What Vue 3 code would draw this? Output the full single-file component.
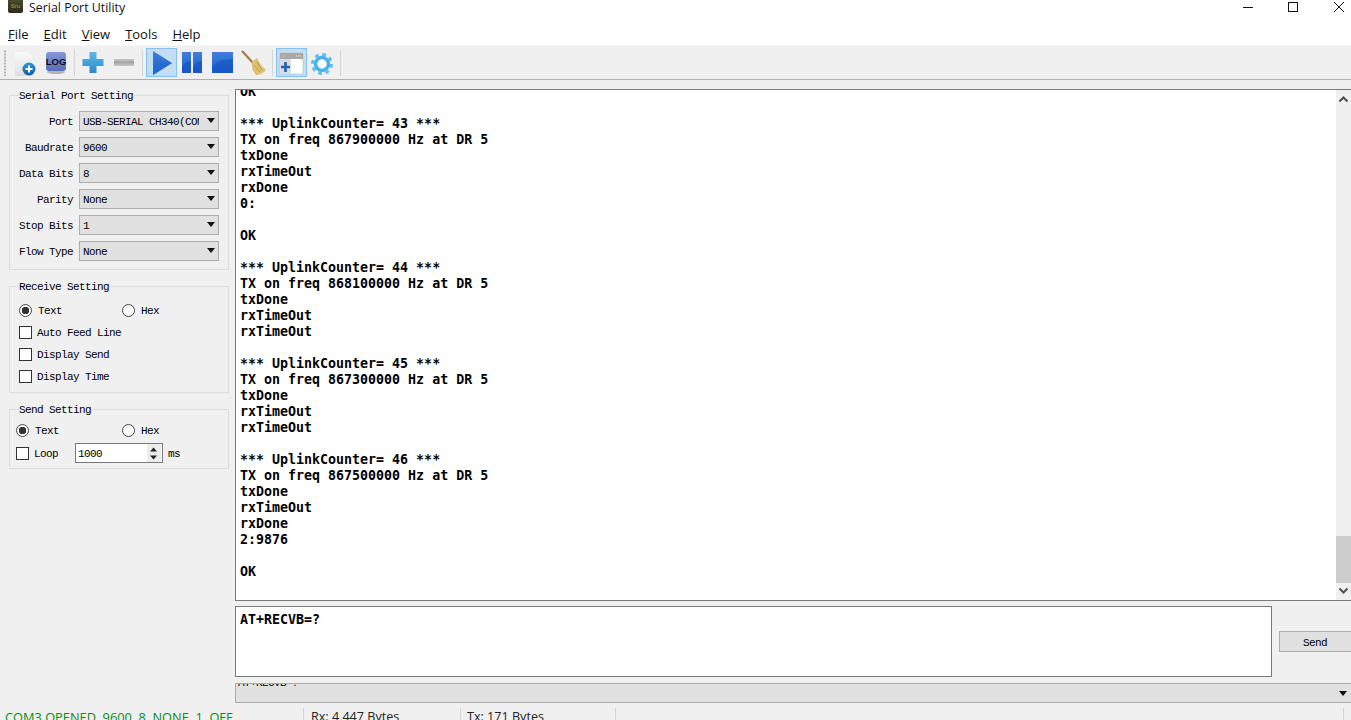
<script setup>
const menus = [
  { key: 'F', rest: 'ile' },
  { key: 'E', rest: 'dit' },
  { key: 'V', rest: 'iew' },
  { key: 'T', rest: 'ools' },
  { key: 'H', rest: 'elp' }
]
const combos = [
  { label: 'Port', value: 'USB-SERIAL CH340(COM3)' },
  { label: 'Baudrate', value: '9600' },
  { label: 'Data Bits', value: '8' },
  { label: 'Parity', value: 'None' },
  { label: 'Stop Bits', value: '1' },
  { label: 'Flow Type', value: 'None' }
]
const checks = ['Auto Feed Line', 'Display Send', 'Display Time']
const log = `OK

*** UplinkCounter= 43 ***
TX on freq 867900000 Hz at DR 5
txDone
rxTimeOut
rxDone
0:

OK

*** UplinkCounter= 44 ***
TX on freq 868100000 Hz at DR 5
txDone
rxTimeOut
rxTimeOut

*** UplinkCounter= 45 ***
TX on freq 867300000 Hz at DR 5
txDone
rxTimeOut
rxTimeOut

*** UplinkCounter= 46 ***
TX on freq 867500000 Hz at DR 5
txDone
rxTimeOut
rxDone
2:9876

OK
`
</script>

<template>
  <div class="app">
    <header class="titlebar">
      <div class="appicon"><span>Sru</span></div>
      <span class="title">Serial Port Utility</span>
      <div class="winbtns">
        <svg width="12" height="12" viewBox="0 0 12 12"><path d="M1 6.5h10" stroke="#111" stroke-width="1" /></svg>
        <svg width="12" height="12" viewBox="0 0 12 12"><rect x="1.5" y="1.5" width="9" height="9" fill="none" stroke="#111" /></svg>
        <svg class="closeicon" width="12" height="12" viewBox="0 0 12 12"><path d="M1 1l10 10M11 1L1 11" stroke="#111" stroke-width="1" /></svg>
      </div>
    </header>

    <nav class="menubar">
      <span v-for="m in menus" :key="m.key" class="menu"><u>{{ m.key }}</u>{{ m.rest }}</span>
    </nav>

    <div class="toolbar">
      <div class="grip"></div>
      <div class="tool">
        <svg width="31" height="29" viewBox="0 0 31 29">
          <defs>
            <linearGradient id="pg" x1="0" y1="0" x2="0" y2="1"><stop offset="0" stop-color="#fbfbfb" /><stop offset="1" stop-color="#dedede" /></linearGradient>
            <linearGradient id="bl" x1="0" y1="0" x2="0" y2="1"><stop offset="0" stop-color="#2f97d8" /><stop offset="1" stop-color="#0c5fa8" /></linearGradient>
          </defs>
          <path d="M5 4h13l5 5v19H5z" fill="url(#pg)" />
          <circle cx="19" cy="21" r="6.5" fill="url(#bl)" />
          <path d="M19 17.5v7M15.5 21h7" stroke="#fff" stroke-width="2" />
        </svg>
      </div>
      <div class="tool">
        <svg width="31" height="29" viewBox="0 0 31 29">
          <defs>
            <linearGradient id="lg" x1="0" y1="0" x2="0" y2="1"><stop offset="0" stop-color="#8598da" /><stop offset="1" stop-color="#5c6db8" /></linearGradient>
          </defs>
          <ellipse cx="15" cy="24" rx="9" ry="2" fill="#b5b5b5" />
          <rect x="5" y="4" width="20" height="19" rx="3" fill="url(#lg)" />
          <text x="15" y="16.5" text-anchor="middle" class="logtext">LOG</text>
        </svg>
      </div>
      <div class="sep"></div>
      <div class="tool">
        <svg width="31" height="29" viewBox="0 0 31 29">
          <defs>
            <linearGradient id="pl" x1="0" y1="0" x2="0" y2="1"><stop offset="0" stop-color="#5fb8e6" /><stop offset="1" stop-color="#2a8ac6" /></linearGradient>
          </defs>
          <path d="M11.5 4h7v7h7v7h-7v7h-7v-7h-7v-7h7z" fill="url(#pl)" />
        </svg>
      </div>
      <div class="tool">
        <svg width="31" height="29" viewBox="0 0 31 29">
          <defs>
            <linearGradient id="mn" x1="0" y1="0" x2="0" y2="1"><stop offset="0" stop-color="#c4c4c4" /><stop offset=".5" stop-color="#a6a6a6" /><stop offset="1" stop-color="#c8c8c8" /></linearGradient>
          </defs>
          <rect x="5" y="11" width="20" height="7" fill="url(#mn)" />
        </svg>
      </div>
      <div class="sep"></div>
      <div class="tool on">
        <svg width="31" height="29" viewBox="0 0 31 29">
          <defs>
            <linearGradient id="pb" x1="0" y1="0" x2="0" y2="1"><stop offset="0" stop-color="#3f7fdc" /><stop offset="1" stop-color="#1b5ec8" /></linearGradient>
          </defs>
          <path d="M7 3l19 12L7 27z" fill="url(#pb)" />
          <path d="M7 19c5-4 10-5 16-4l3 0L7 27z" fill="#2468d4" opacity=".75" />
        </svg>
      </div>
      <div class="tool">
        <svg width="31" height="29" viewBox="0 0 31 29">
          <rect x="5" y="4" width="9" height="21" fill="url(#pb)" />
          <rect x="16" y="4" width="9" height="21" fill="url(#pb)" />
          <path d="M5 19c3-4 5-6 9-6v12H5zM16 19c3-4 5-6 9-6v12h-9z" fill="#1454c4" opacity=".7" />
        </svg>
      </div>
      <div class="tool">
        <svg width="31" height="29" viewBox="0 0 31 29">
          <rect x="4" y="4" width="21" height="21" fill="url(#pb)" />
          <path d="M4 19c5-6 11-8 21-8v14H4z" fill="#1454c4" opacity=".65" />
        </svg>
      </div>
      <div class="tool">
        <svg width="31" height="29" viewBox="0 0 31 29">
          <path d="M3 3l12 13" stroke="#a87a44" stroke-width="2.2" />
          <path d="M13 14l5-4c2 5 5 9 9 12-2 3-7 5-10 5-3-3-5-8-4-13z" fill="#e0c070" />
          <path d="M15 17l6 7M18 14l5 8" stroke="#bd9a4c" stroke-width="1" />
        </svg>
      </div>
      <div class="sep"></div>
      <div class="tool on">
        <svg width="31" height="29" viewBox="0 0 31 29">
          <rect x="4" y="5" width="23" height="21" fill="#fff" stroke="#b8b8b8" stroke-width=".6" />
          <rect x="4" y="5" width="23" height="6" fill="#a8a8a8" />
          <path d="M7 8h1M20 8h1M22 8h1M24 8h1" stroke="#eee" />
          <rect x="4" y="11" width="11" height="15" fill="#d9dde2" />
          <path d="M9.500 14v10M5 19h9" stroke="#1c62b8" stroke-width="2.600" />
        </svg>
      </div>
      <div class="tool">
        <svg width="31" height="29" viewBox="0 0 31 29">
          <circle cx="15" cy="16" r="9.500" fill="none" stroke="#5cc0f2" stroke-width="3" stroke-dasharray="3.730 3.730" />
          <circle cx="15" cy="16" r="6.500" fill="#fff" stroke="#47b2ec" stroke-width="3.500" />
        </svg>
      </div>
      <div class="sep"></div>
    </div>

    <main class="main">
      <aside class="side">
        <section class="group g1">
          <span class="gtitle">Serial Port Setting</span>
          <div v-for="c in combos" :key="c.label" class="crow">
            <label class="clabel">{{ c.label }}</label>
            <div class="combo">
              <span class="cval">{{ c.value }}</span>
              <i class="arrow"></i>
            </div>
          </div>
        </section>

        <section class="group g2">
          <span class="gtitle">Receive Setting</span>
          <div class="rrow">
            <div class="ropt"><i class="radio sel"></i><span class="txt">Text</span></div>
            <div class="ropt"><i class="radio"></i><span class="txt">Hex</span></div>
          </div>
          <div v-for="c in checks" :key="c" class="chk">
            <i class="box"></i><span class="txt">{{ c }}</span>
          </div>
        </section>

        <section class="group g3">
          <span class="gtitle">Send Setting</span>
          <div class="rrow sr">
            <div class="ropt o1"><i class="radio sel"></i><span class="txt">Text</span></div>
            <div class="ropt"><i class="radio"></i><span class="txt">Hex</span></div>
          </div>
          <div class="looprow">
            <i class="box"></i><span class="loop txt">Loop</span>
            <div class="spin">
              <span class="txt">1000</span>
              <div class="spinbtns">
                <svg width="13" height="7" viewBox="0 0 13 7"><path d="M6.500 1.500L10 5.500H3z" fill="#222" /></svg>
                <svg width="13" height="7" viewBox="0 0 13 7"><path d="M6.500 5.500L3 1.500h7z" fill="#222" /></svg>
              </div>
            </div>
            <span class="ms txt">ms</span>
          </div>
        </section>
      </aside>

      <div class="right">
        <div class="logbox">
          <div class="logview"><pre class="logtxt">{{ log }}</pre></div>
          <div class="vbar">
            <svg width="15" height="17" viewBox="0 0 15 17"><path d="M3.500 11.500L7.500 7.500l4 4" fill="none" stroke="#505050" stroke-width="2" /></svg>
            <div class="track"><div class="thumb"></div></div>
            <svg width="15" height="17" viewBox="0 0 15 17"><path d="M3.500 5.500L7.500 9.500l4-4" fill="none" stroke="#505050" stroke-width="2" /></svg>
          </div>
        </div>
        <div class="sendrow">
          <div class="input">AT+RECVB=?</div>
          <button class="send">Send</button>
        </div>
        <div class="history">
          <span class="htext">AT+RECVB=?</span>
          <i class="arrow"></i>
        </div>
      </div>
    </main>

    <footer class="status">
      <div class="cell c1 ok">COM3 OPENED, 9600, 8, NONE, 1, OFF</div>
      <div class="cell c2">Rx: 4,447 Bytes</div>
      <div class="cell c3">Tx: 171 Bytes</div>
      <div class="cell c4"></div>
    </footer>
  </div>
</template>

<style>
html, body { margin: 0; overflow: hidden; background: #f0f0f0; }
</style>

<style scoped>
.app {
  width: 1351px;
  height: 720px;
  overflow: hidden;
  display: flex;
  flex-direction: column;
  background: #f0f0f0;
  color: #000;
  font-family: "Liberation Mono", monospace;
  font-size: 11px;
}

.titlebar {
  height: 22px;
  flex: none;
  display: flex;
  align-items: flex-start;
  background: #fff;
  position: relative;
}
.appicon {
  width: 15px;
  height: 13px;
  margin-left: 8px;
  background: linear-gradient(#4a4a2c, #2c2c18);
  border-radius: 0 0 2px 2px;
  overflow: hidden;
  display: flex;
  justify-content: center;
}
.appicon span {
  font: 6px/13px "Liberation Sans", sans-serif;
  color: #a8a050;
}
.title {
  margin-left: 6px;
  font: 12.4px/16px "Open Sans", "Liberation Sans", sans-serif;
  color: #111;
}
.winbtns {
  margin-left: auto;
  display: flex;
  gap: 33px;
  padding: 1px 6px 0 0;
}
.closeicon { margin-left: 1px; }

.menubar {
  height: 23px;
  flex: none;
  background: #fff;
  display: flex;
  align-items: center;
  padding-left: 8px;
  gap: 15px;
  font: 13px/16px "Open Sans", "Liberation Sans", sans-serif;
}
.menu { color: #111; }

.toolbar {
  height: 33px;
  flex: none;
  box-sizing: content-box;
  border-bottom: 1px solid #aeaeae;
  border-top: 1px solid #f6f6f6;
  display: flex;
  align-items: center;
  background: #f0f0f0;
}
.grip {
  width: 10px;
  height: 26px;
  flex: none;
  background-image: radial-gradient(circle at 5px 1.500px, #b0b0b0 1px, transparent 1.200px);
  background-size: 10px 3px;
}
.tool {
  width: 31px;
  height: 29px;
  flex: none;
}
.tool svg { display: block; }
.on {
  background: #c4ddf3;
  box-shadow: inset 0 0 0 1px #84c1f5;
}
.sep {
  width: 6px;
  height: 26px;
  flex: none;
  box-sizing: border-box;
  border-right: 3px solid transparent;
  border-left: 2px solid transparent;
  background: #d4d4d4;
  background-clip: padding-box;
}
.logtext {
  font: bold 9.500px "Liberation Sans", sans-serif;
  fill: #0d0d2a;
}

.main {
  flex: none;
  height: 623px;
  display: flex;
}
.side {
  width: 235px;
  flex: none;
  padding: 15px 0 0 9px;
  box-sizing: border-box;
}
.group {
  position: relative;
  width: 220px;
  box-sizing: border-box;
  border: 1px solid #dcdcdc;
  letter-spacing: -.6px;
}
.gtitle {
  position: absolute;
  left: 9px;
  top: -7px;
  padding: 0 1px 0 0;
  background: #f0f0f0;
  line-height: 14px;
  white-space: nowrap;
}
.txt { padding-top: 2px; }
.g1 {
  height: 175px;
  padding: 15px 0 0;
  display: flex;
  flex-direction: column;
  gap: 6px;
}
.g2 {
  height: 107px;
  margin-top: 16px;
  padding: 12px 0 0 9px;
}
.g3 {
  height: 60px;
  margin-top: 16px;
  padding: 10px 0 0 6px;
}
.crow {
  display: flex;
  align-items: center;
  height: 20px;
}
.clabel {
  width: 63px;
  text-align: right;
  margin-right: 6px;
  padding-top: 2px;
  white-space: nowrap;
}
.combo {
  position: relative;
  width: 140px;
  height: 20px;
  box-sizing: border-box;
  background: #e1e1e1;
  border: 1px solid #adadad;
  display: flex;
  align-items: center;
  padding-left: 3px;
}
.cval {
  width: 116px;
  padding-top: 2px;
  overflow: hidden;
  white-space: nowrap;
}
.arrow {
  position: absolute;
  right: 3px;
  top: 6px;
  width: 0;
  height: 0;
  border-left: 4.500px solid transparent;
  border-right: 4.500px solid transparent;
  border-top: 5px solid #111;
}
.rrow {
  height: 22px;
  display: flex;
  align-items: center;
}
.ropt {
  display: flex;
  align-items: center;
  gap: 6px;
  width: 103px;
  flex: none;
}
.sr { height: 20px; }
.o1 { width: 106px; }
.radio {
  width: 13px;
  height: 13px;
  box-sizing: border-box;
  border: 1px solid #444;
  border-radius: 50%;
  background: #fff;
  flex: none;
  display: block;
}
.sel {
  background: radial-gradient(circle, #333 3.500px, #fff 4px);
}
.chk {
  height: 22px;
  display: flex;
  align-items: center;
  gap: 5px;
}
.box {
  width: 13px;
  height: 13px;
  box-sizing: border-box;
  border: 1px solid #333;
  background: #fff;
  flex: none;
  display: block;
}
.looprow {
  margin-top: 3px;
  height: 20px;
  display: flex;
  align-items: center;
}
.loop { margin-left: 5px; width: 41px; }
.spin {
  width: 88px;
  height: 20px;
  box-sizing: border-box;
  border: 1px solid #7a7a7a;
  background: #fff;
  display: flex;
  align-items: center;
  justify-content: space-between;
  padding-left: 2px;
  letter-spacing: -.6px;
}
.spinbtns {
  width: 14px;
  height: 18px;
  display: flex;
  flex-direction: column;
  justify-content: center;
  background: #ececec;
  margin-right: 1px;
  gap: 1px;
}
.spinbtns svg { display: block; }
.ms { margin-left: 5px; }

.right {
  flex: 1;
  min-width: 0;
  padding-top: 9px;
  display: flex;
  flex-direction: column;
}
.logbox {
  height: 512px;
  box-sizing: border-box;
  border: 1px solid #7a7a7a;
  border-right: 0;
  background: #fff;
  display: flex;
}
.logview {
  flex: 1;
  min-width: 0;
  overflow: hidden;
  padding-left: 4px;
}
.logtxt {
  margin: -6px 0 0;
  font: bold 13.300px/16px "DejaVu Sans Mono", monospace;
}
.vbar {
  width: 15px;
  flex: none;
  background: #f0f0f0;
  display: flex;
  flex-direction: column;
}
.vbar svg { display: block; flex: none; }
.track {
  flex: 1;
  display: flex;
  flex-direction: column;
  justify-content: flex-end;
}
.thumb {
  height: 47px;
  background: #cdcdcd;
}
.sendrow {
  margin-top: 5px;
  height: 71px;
  display: flex;
  align-items: center;
  overflow: hidden;
}
.input {
  width: 1037px;
  height: 71px;
  box-sizing: border-box;
  flex: none;
  border: 1px solid #7a7a7a;
  background: #fff;
  padding: 5px 4px;
  font: bold 13.300px/16px "DejaVu Sans Mono", monospace;
}
.send {
  flex: none;
  margin: 0 0 0 7px;
  width: 73px;
  height: 21px;
  box-sizing: border-box;
  border: 1px solid #adadad;
  border-right: 0;
  background: #e1e1e1;
  padding: 2px 2px 0 0;
  font-family: "Liberation Mono", monospace;
  font-size: 11px;
  letter-spacing: -.6px;
  color: #000;
}
.history {
  position: relative;
  margin-top: 6px;
  height: 20px;
  box-sizing: border-box;
  border-top: 1px solid #adadad;
  border-bottom: 1px solid #adadad;
  border-left: 1px solid #adadad;
  background: #e1e1e1;
  overflow: hidden;
  padding-left: 2px;
}
.history .arrow { right: 4px; top: 7px; }
.htext {
  display: block;
  margin-top: -8px;
  line-height: 14px;
  letter-spacing: -.6px;
}

.status {
  flex: none;
  height: 17px;
  padding-top: 5px;
  display: flex;
  font: 12.600px/16px "Open Sans", "Liberation Sans", sans-serif;
  color: #222;
  overflow: hidden;
}
.cell {
  flex: none;
  height: 20px;
  padding-top: 1px;
  box-sizing: border-box;
  border-right: 1px solid #d6d6d6;
  white-space: nowrap;
}
.c1 { width: 304px; padding-left: 5px; font-size: 12.800px; }
.c2 { width: 157px; padding-left: 7px; }
.c3 { width: 155px; padding-left: 6px; }
.c4 { width: 728px; }
.ok { color: #0a8a1a; }
</style>
